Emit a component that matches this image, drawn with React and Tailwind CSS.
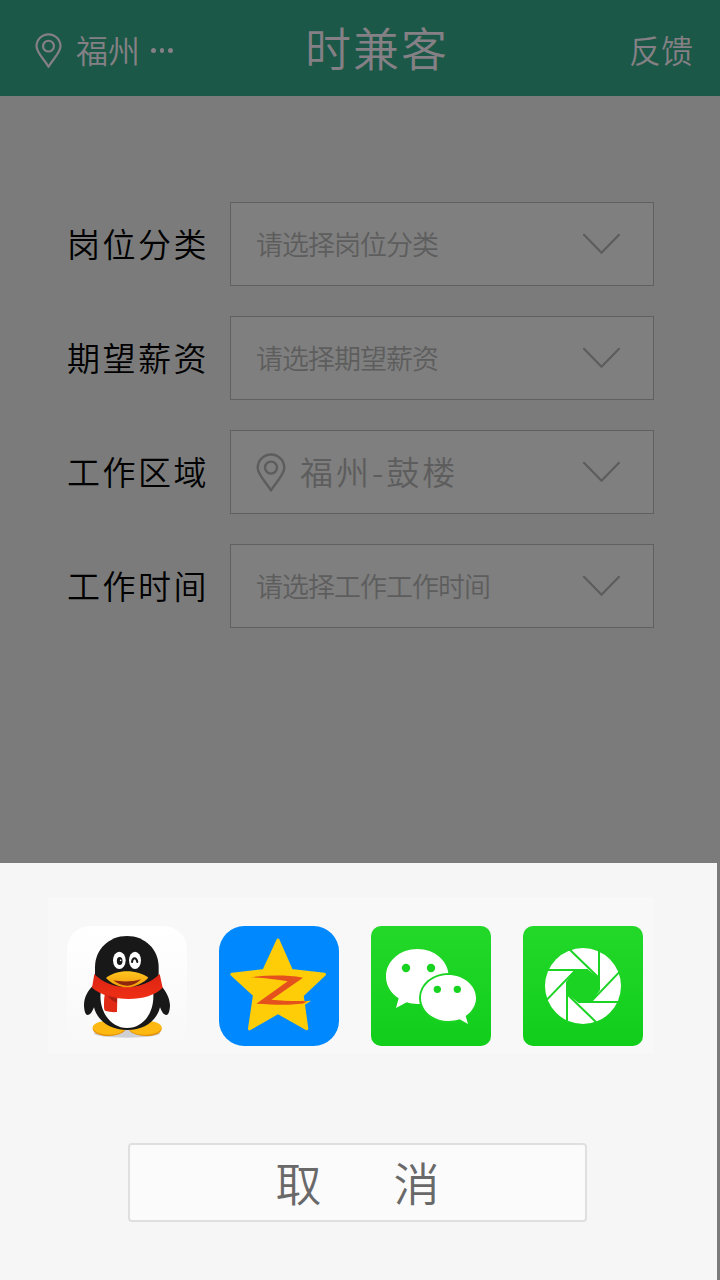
import React from "react";

function Pin({ className }) {
  return (
    <svg className={className} viewBox="0 0 30 40" fill="none" stroke="currentColor" strokeWidth="2.4" strokeLinejoin="round">
      <path d="M15 37.5C10.5 29.5 1.7 22 1.7 14.8a13.3 13.3 0 0 1 26.6 0C28.3 22 19.5 29.5 15 37.5Z" />
      <circle cx="15" cy="14.6" r="6" />
    </svg>
  );
}

function Chevron() {
  return (
    <svg className="h-[22px] w-[38px] text-[#5d5d5d]" viewBox="0 0 38 22" fill="none" stroke="currentColor" strokeWidth="2.2" strokeLinecap="round" strokeLinejoin="round">
      <path d="M2 1.8 19.5 19.8 37 1.8" />
    </svg>
  );
}

function QQIcon() {
  return (
    <svg className="size-[120px]" viewBox="81 108 360 360">
      <defs>
        <linearGradient id="qqTile" x1="0" y1="0" x2="0" y2="1">
          <stop offset="0" stopColor="#ffffff" />
          <stop offset="1" stopColor="#f8f8f8" />
        </linearGradient>
        <linearGradient id="qqBeak" x1="0" y1="0" x2="0" y2="1">
          <stop offset="0" stopColor="#ffc620" />
          <stop offset="1" stopColor="#f39a09" />
        </linearGradient>
        <linearGradient id="qqScarf" x1="0" y1="0" x2="0" y2="1">
          <stop offset="0" stopColor="#dc2414" />
          <stop offset="1" stopColor="#ee2f14" />
        </linearGradient>
      </defs>
      <rect x="81" y="108" width="360" height="360" rx="70" fill="url(#qqTile)" />
      <ellipse cx="261" cy="430" rx="100" ry="13" fill="#cfd0d4" />
      <path d="M158 416c0-12 26-23 50-21l50 20c-2 12-22 23-52 23-28 0-48-10-48-22Z" fill="#e39207" />
      <path d="M365 416c0-12-26-23-50-21l-50 20c2 12 22 23 52 23 30 0 48-10 48-22Z" fill="#e39207" />
      <path d="M158 412c0-12 26-21 50-19l50 20c-4 11-24 21-52 21s-48-10-48-22Z" fill="#fdb912" />
      <path d="M365 412c0-12-26-21-50-19l-50 20c4 11 22 21 50 21 30 0 50-10 50-22Z" fill="#fdb912" />
      <path d="M160 286c-18 18-27 36-28 58 0 16 4 31 11 31 8 0 14-10 19-23 10 40 48 68 100 68s88-28 98-68c5 13 11 23 19 23 7 0 11-15 11-31-2-22-12-40-28-58Z" fill="#181818" />
      <path d="M165 272V232c0-54 42-94 96-94s95 40 95 94v40l-30 42H195Z" fill="#181818" />
      <path d="M183 300h156c8 64-27 114-78 114s-88-54-78-114Z" fill="#fff" />
      <path d="M163 252c50 52 144 52 196 0l9 41c-42 44-156 46-212 0Z" fill="url(#qqScarf)" />
      <path d="M195 310c12 6 24 10 37 11l-1 45c-12 1-24 0-34-3-5-2-5-8-5-14 0-13 0-26 3-39Z" fill="#e12a16" />
      <path d="M203 318 231 325v13c-10-2-20-10-28-20Z" fill="#a91f13" />
      <ellipse cx="238" cy="211" rx="19" ry="26" fill="#fff" />
      <ellipse cx="285" cy="211" rx="18" ry="26" fill="#fff" />
      <ellipse cx="239" cy="213" rx="8.5" ry="12" fill="#181818" />
      <circle cx="242" cy="211" r="2.5" fill="#fff" />
      <path d="M276 216c2-15 13-15 16 0" fill="none" stroke="#181818" strokeWidth="6" strokeLinecap="round" />
      <path d="M198 264c14-12 40-20 63-20s50 8 64 19c-12 14-40 29-64 29s-50-13-63-28Z" fill="url(#qqBeak)" />
      <path d="M220 271c24 5 57 5 83-3-12 12-27 19-41 19s-30-6-42-16Z" fill="#8f250d" />
    </svg>
  );
}

function QzoneIcon() {
  return (
    <svg className="size-[120px]" viewBox="42 33 360 360">
      <rect x="42" y="33" width="360" height="360" rx="76" fill="#0089ff" />
      <path
        d="M219 76 259 167 358 178 291 241 305 341 219 292 134 341 149 240 81 178 177 167Z"
        fill="#ffcd08"
        stroke="#ffcd08"
        strokeWidth="10"
        strokeLinejoin="round"
      />
      <path d="M134 187C185 181 240 179 294 188L199 254C230 257 262 259 298 258L304 263C260 272 210 269 154 266L248 199C214 193 172 188 134 187Z" fill="#e5511d" />
      <path d="M292 259 318 257 300 269Z" fill="#ffcd08" />
      <path d="M290 257 308 260 290 266Z" fill="#e5511d" />
    </svg>
  );
}

function GreenTile({ id }) {
  return (
    <defs>
      <linearGradient id={id} x1="0" y1="0" x2="0" y2="1">
        <stop offset="0" stopColor="#23d829" />
        <stop offset="1" stopColor="#11ce1b" />
      </linearGradient>
    </defs>
  );
}

function WechatIcon() {
  return (
    <svg className="size-[120px]" viewBox="33 33 360 360">
      <GreenTile id="wechatTile" />
      <rect x="33" y="33" width="360" height="360" rx="30" fill="url(#wechatTile)" />
      <path d="M172 102c52 0 94 36 94 83s-42 82-94 82c-11 0-22-1-32-5l-32 17 8-29c-24-16-38-39-38-65 0-47 42-83 94-83Z" fill="#fff" />
      <ellipse cx="265" cy="249" rx="88" ry="75" fill="#1ad322" />
      <path d="M265 180c46 0 83 31 83 69 0 22-12 41-31 54l7 24-25-14c-11 4-22 5-34 5-46 0-82-31-82-69s36-69 82-69Z" fill="#fff" />
      <g fill="#19d321">
        <circle cx="138" cy="159" r="12.5" />
        <circle cx="213" cy="159" r="12.5" />
        <circle cx="232" cy="223" r="11" />
        <circle cx="292" cy="223" r="11" />
      </g>
    </svg>
  );
}

function MomentsIcon() {
  return (
    <svg className="size-[120px]" viewBox="39 108 360 360">
      <GreenTile id="momentsTile" />
      <rect x="39" y="108" width="360" height="360" rx="30" fill="url(#momentsTile)" />
      <circle cx="219" cy="288" r="114" fill="#fff" />
      <path d="M233 238 266 264 270 300 246 334 205 338 172 312 168 276 193 242Z" fill="#1ad322" />
      <path
        d="M178 178 267 264M267 176V300M330 244 246 332M328 336H205M260 398 171 312M171 398V276M108 332 193 244M110 240H233"
        fill="none"
        stroke="#1ad322"
        strokeWidth="6"
      />
    </svg>
  );
}

const rows = [
  { label: "岗位分类", value: "请选择岗位分类" },
  { label: "期望薪资", value: "请选择期望薪资" },
  { label: "工作区域", value: "福州-鼓楼", located: true },
  { label: "工作时间", value: "请选择工作工作时间" },
];

function Field({ label, value, located }) {
  return (
    <div className="flex h-[84px] items-center">
      <span className="w-[163px] whitespace-nowrap pb-[2px] text-[33px] leading-[82px] tracking-[2.5px] text-black">{label}</span>
      <button className="flex h-[84px] w-[424px] items-center justify-between border border-[#606060] bg-[#7f7f7f] pl-[25px] pr-[33px] text-[#5d5d5d]">
        {located ? (
          <span className="flex items-center">
            <Pin className="mt-px h-10 w-[30px]" />
            <span className="ml-[14px] whitespace-nowrap pb-px text-[33px] leading-[81px] tracking-[3px]">{value}</span>
          </span>
        ) : (
          <span className="whitespace-nowrap pb-px text-[27px] leading-[81px] tracking-[-1px]">{value}</span>
        )}
        <Chevron />
      </button>
    </div>
  );
}

export default function App() {
  return (
    <div className="flex h-[1280px] w-[720px] flex-col overflow-hidden bg-[#7b7b7b] font-['Noto_Sans_CJK_SC_DemiLight','Noto_Sans_CJK_SC',sans-serif] font-[350]">
      <header className="grid h-24 grid-cols-[270px_auto_1fr] items-center bg-[#1c5847] pl-[35px] pr-[27px] text-[#858085]">
        <div className="flex items-center">
          <Pin className="mt-[6px] h-9 w-[27px]" />
          <span className="ml-[14px] whitespace-nowrap pt-[2px] text-[32px] leading-[92px]">福州</span>
          <span className="ml-[11px] mt-[5px] flex gap-1">
            <i className="size-[4.5px] rounded-full bg-current" />
            <i className="size-[4.5px] rounded-full bg-current" />
            <i className="size-[4.5px] rounded-full bg-current" />
          </span>
        </div>
        <h1 className="whitespace-nowrap pb-1 text-[46px] leading-[92px] tracking-[2px]">时兼客</h1>
        <span className="whitespace-nowrap pt-[2px] text-right text-[32px] leading-[92px]">反馈</span>
      </header>

      <main className="flex h-[767px] flex-col gap-[30px] pl-[67px] pt-[106px]">
        {rows.map((row) => (
          <Field key={row.label} {...row} />
        ))}
      </main>

      <section className="flex h-[417px] w-[717px] flex-col bg-[#f6f6f6] pl-12 pt-[34px]">
        <div className="flex h-[156px] w-[606px] items-start gap-8 bg-[#f8f8f8] pl-[19px] pt-[29px]">
          <QQIcon />
          <QzoneIcon />
          <WechatIcon />
          <MomentsIcon />
        </div>
        <button className="ml-20 mt-[90px] flex h-[79px] w-[459px] items-center justify-center gap-[72px] rounded-[4px] border-2 border-[#dfdfdf] bg-[#fbfbfb] pb-[3px] text-[46px] leading-[72px] text-[#696969]">
          <span>取</span>
          <span>消</span>
        </button>
      </section>
    </div>
  );
}
